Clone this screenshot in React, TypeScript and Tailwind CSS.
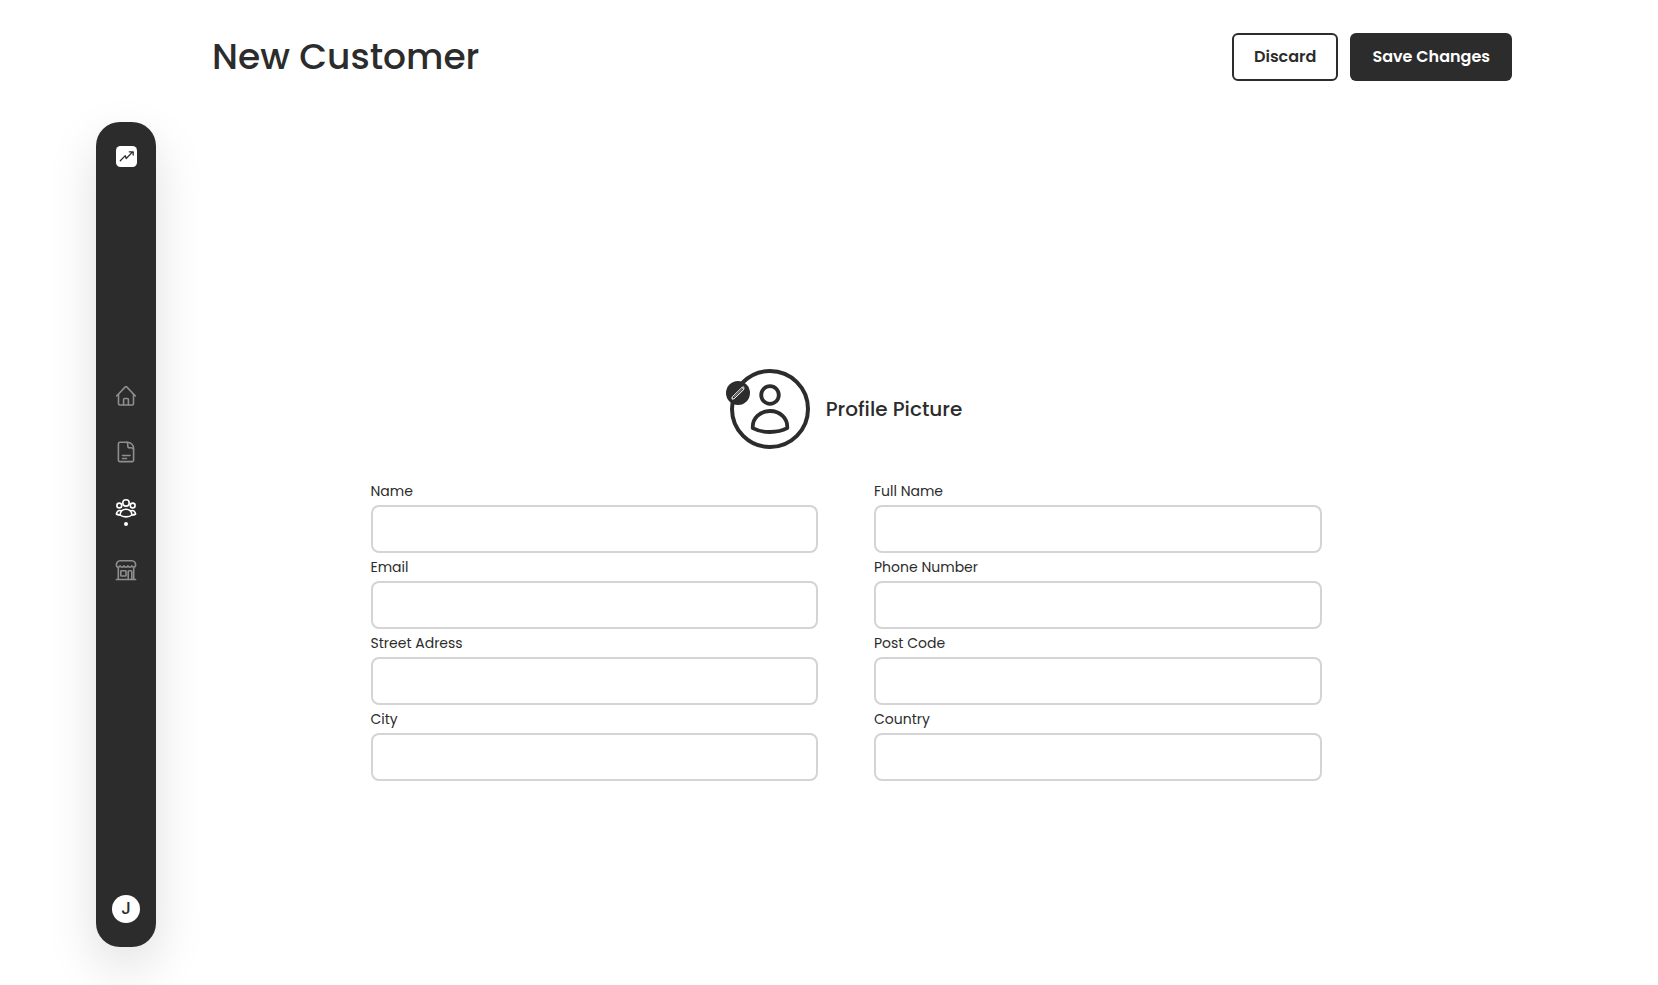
import type { ReactNode } from "react";

const fields = [
  { id: "name", label: "Name", type: "text" },
  { id: "full-name", label: "Full Name", type: "text" },
  { id: "email", label: "Email", type: "email" },
  { id: "phone", label: "Phone Number", type: "tel" },
  { id: "street", label: "Street Adress", type: "text" },
  { id: "post-code", label: "Post Code", type: "text" },
  { id: "city", label: "City", type: "text" },
  { id: "country", label: "Country", type: "text" },
];

function Icon({ children }: { children: ReactNode }) {
  return (
    <svg
      viewBox="0 0 22 22"
      className="size-[22px]"
      fill="none"
      stroke="currentColor"
      strokeWidth="1.6"
      strokeLinecap="round"
      strokeLinejoin="round"
      aria-hidden="true"
    >
      {children}
    </svg>
  );
}

function HomeIcon() {
  return (
    <Icon>
      <path d="M1.6 11 10.3 1.900a1 1 0 0 1 1.400 0L20.400 11" />
      <path d="M3.500 9.400v9.400a1.200 1.200 0 0 0 1.200 1.200h12.600a1.200 1.200 0 0 0 1.200-1.200V9.400" />
      <path d="M8.600 19.800v-5.300a1 1 0 0 1 1-1h2.800a1 1 0 0 1 1 1v5.300" />
    </Icon>
  );
}

function DocumentIcon() {
  return (
    <Icon>
      <path d="M12.500 1.200H4.900a1.500 1.500 0 0 0-1.500 1.500v16.600a1.300 1.300 0 0 0 1.300 1.300h12.600a1.300 1.300 0 0 0 1.300-1.300V7.300c0-3.300-2.800-6.100-6.100-6.100Z" />
      <path d="M11.600 1.300c1.100.5 1.400 1.600 1.200 3.200-.2 1.700.6 2.500 2.300 2.300 1.600-.2 3 .2 3.400 1.400" />
      <path d="M7.500 14.500h7.500M7.500 17.500h4" />
    </Icon>
  );
}

function CustomersIcon() {
  return (
    <Icon>
      <circle cx="11" cy="5.900" r="3.200" />
      <circle cx="4.300" cy="8.500" r="2.400" />
      <circle cx="17.700" cy="8.500" r="2.400" />
      <path d="M5 18c.4-3.700 2.800-5.700 6-5.700s5.600 2 6 5.700c-1.500 1.300-3.500 1.900-6 1.900s-4.500-.6-6-1.900Z" />
      <path d="M5.900 13.700c-2.400-.6-4.100.9-4.500 3.300.9.700 2 1 3.600 1M16.100 13.700c2.400-.6 4.100.9 4.500 3.300-.9.700-2 1-3.600 1" />
    </Icon>
  );
}

function ShopIcon() {
  return (
    <Icon>
      <path d="M5 .8h12c2.200 0 3.600 2 3.600 4.300 0 1.200-.7 2-1.700 2-1 0-1.500-.5-2-1.300-.5.900-1.100 1.300-2 1.300s-1.500-.4-1.950-1.300c-.45.900-1.050 1.300-1.950 1.300s-1.500-.4-1.950-1.300C8.600 6.700 8 7.100 7.100 7.100s-1.500-.4-2-1.300c-.5.800-1 1.300-2 1.300s-1.700-.8-1.700-2C1.400 2.800 2.800.8 5 .8Z" />
      <path d="M3.300 7.500v11.900M18.700 7.500v11.900M1.400 19.500h19.200" />
      <rect x="5.800" y="10.800" width="5.200" height="5.200" rx=".6" />
      <path d="M13.200 19.200v-7.400a1 1 0 0 1 1-1h1.600a1 1 0 0 1 1 1v7.400" />
    </Icon>
  );
}

function Logo() {
  return (
    <svg viewBox="0 0 21 21" className="size-[21px]" fill="none" aria-hidden="true">
      <rect width="21" height="21" rx="4.500" fill="#fff" />
      <path
        d="M4.300 14.800 9.300 9.600l.9 2.900 6.500-6.600M13.300 5.800h3.900v3.300"
        stroke="#2c2c2c"
        strokeWidth="1.300"
        strokeLinecap="round"
        strokeLinejoin="round"
      />
    </svg>
  );
}

const navItems = [
  { label: "Home", icon: <HomeIcon />, active: false },
  { label: "Documents", icon: <DocumentIcon />, active: false },
  { label: "Customers", icon: <CustomersIcon />, active: true },
  { label: "Shop", icon: <ShopIcon />, active: false },
];

function Sidebar() {
  return (
    <aside className="mt-[122px] mb-[38px] flex w-[60px] shrink-0 flex-col items-center rounded-3xl bg-[#2c2c2c] py-6 shadow-[0_20px_50px_rgba(0,0,0,0.13)]">
      <a href="#dashboard" aria-label="Dashboard">
        <Logo />
      </a>
      <nav className="mt-[218px] flex flex-col gap-[34px]">
        {navItems.map((item) => (
          <a
            key={item.label}
            href={"#" + item.label.toLowerCase()}
            aria-label={item.label}
            aria-current={item.active ? "page" : undefined}
            className={
              item.active
                ? "flex flex-col items-center gap-[3px] text-white"
                : "flex flex-col items-center text-[#8e8e8e]"
            }
          >
            {item.icon}
            {item.active && <span className="size-1 rounded-full bg-white" />}
          </a>
        ))}
      </nav>
      <button
        type="button"
        className="mt-auto flex size-7 items-center justify-center rounded-full bg-white font-['Roboto',sans-serif] text-base font-medium"
      >
        J
      </button>
    </aside>
  );
}

function ProfilePicture() {
  return (
    <div className="flex items-center justify-center gap-4">
      <div className="relative size-20">
        <svg
          viewBox="0 0 80 80"
          className="size-20"
          fill="none"
          stroke="#2c2c2c"
          strokeWidth="4"
          strokeLinejoin="round"
          aria-hidden="true"
        >
          <circle cx="40" cy="40" r="38" />
          <circle cx="40" cy="26" r="8.800" strokeWidth="3.800" />
          <path
            d="M22.800 59.200C22 49.500 30 42 40 42s18 7.500 17.200 17.200C52 62 46.500 63 40 63s-12-1-17.200-3.800Z"
            strokeWidth="3.800"
          />
        </svg>
        <button
          type="button"
          aria-label="Edit profile picture"
          className="absolute top-3 -left-1 size-6 rounded-full bg-[#2c2c2c]"
        >
          <svg
            viewBox="0 0 24 24"
            className="size-6"
            fill="none"
            stroke="#fff"
            strokeWidth="1"
            strokeLinejoin="round"
            aria-hidden="true"
          >
            <path d="M6.200 16 15.900 6.500l2 1.900-9.800 9.400-2.100.3.200-2.100Z" />
            <path d="m16 6.400 1.300-.5.700.6-.2 1.700" />
            <path d="m8 16.200 8-7.800" strokeWidth=".5" />
          </svg>
        </button>
      </div>
      <h2 className="text-xl font-medium">Profile Picture</h2>
    </div>
  );
}

export default function App() {
  return (
    <div className="flex min-h-screen bg-white pr-[146px] pl-24 font-['Poppins','Inter',sans-serif] text-[#2c2c2c]">
      <Sidebar />
      <main className="ml-14 flex min-w-0 flex-1 flex-col">
        <header className="flex items-center justify-between py-[33px]">
          <h1 className="text-4xl/[48px] font-medium">New Customer</h1>
          <div className="flex gap-3">
            <button
              type="button"
              className="h-12 rounded-md border-2 border-[#2c2c2c] px-5 font-semibold"
            >
              Discard
            </button>
            <button
              type="submit"
              form="customer"
              className="h-12 rounded-md bg-[#2c2c2c] px-[22px] font-semibold text-white"
            >
              Save Changes
            </button>
          </div>
        </header>
        <div className="flex flex-1 flex-col justify-center pt-[51px] pr-8">
          <form id="customer" className="mx-auto flex w-3/4 flex-col gap-8">
            <ProfilePicture />
            <div className="grid grid-cols-2 gap-x-14 gap-y-1">
              {fields.map((field) => (
                <div key={field.id} className="flex flex-col gap-1">
                  <label htmlFor={field.id} className="text-sm/[20px]">
                    {field.label}
                  </label>
                  <input
                    id={field.id}
                    type={field.type}
                    className="h-12 w-full rounded-lg border-2 border-[#d4d4d4] px-3"
                  />
                </div>
              ))}
            </div>
          </form>
        </div>
      </main>
    </div>
  );
}
